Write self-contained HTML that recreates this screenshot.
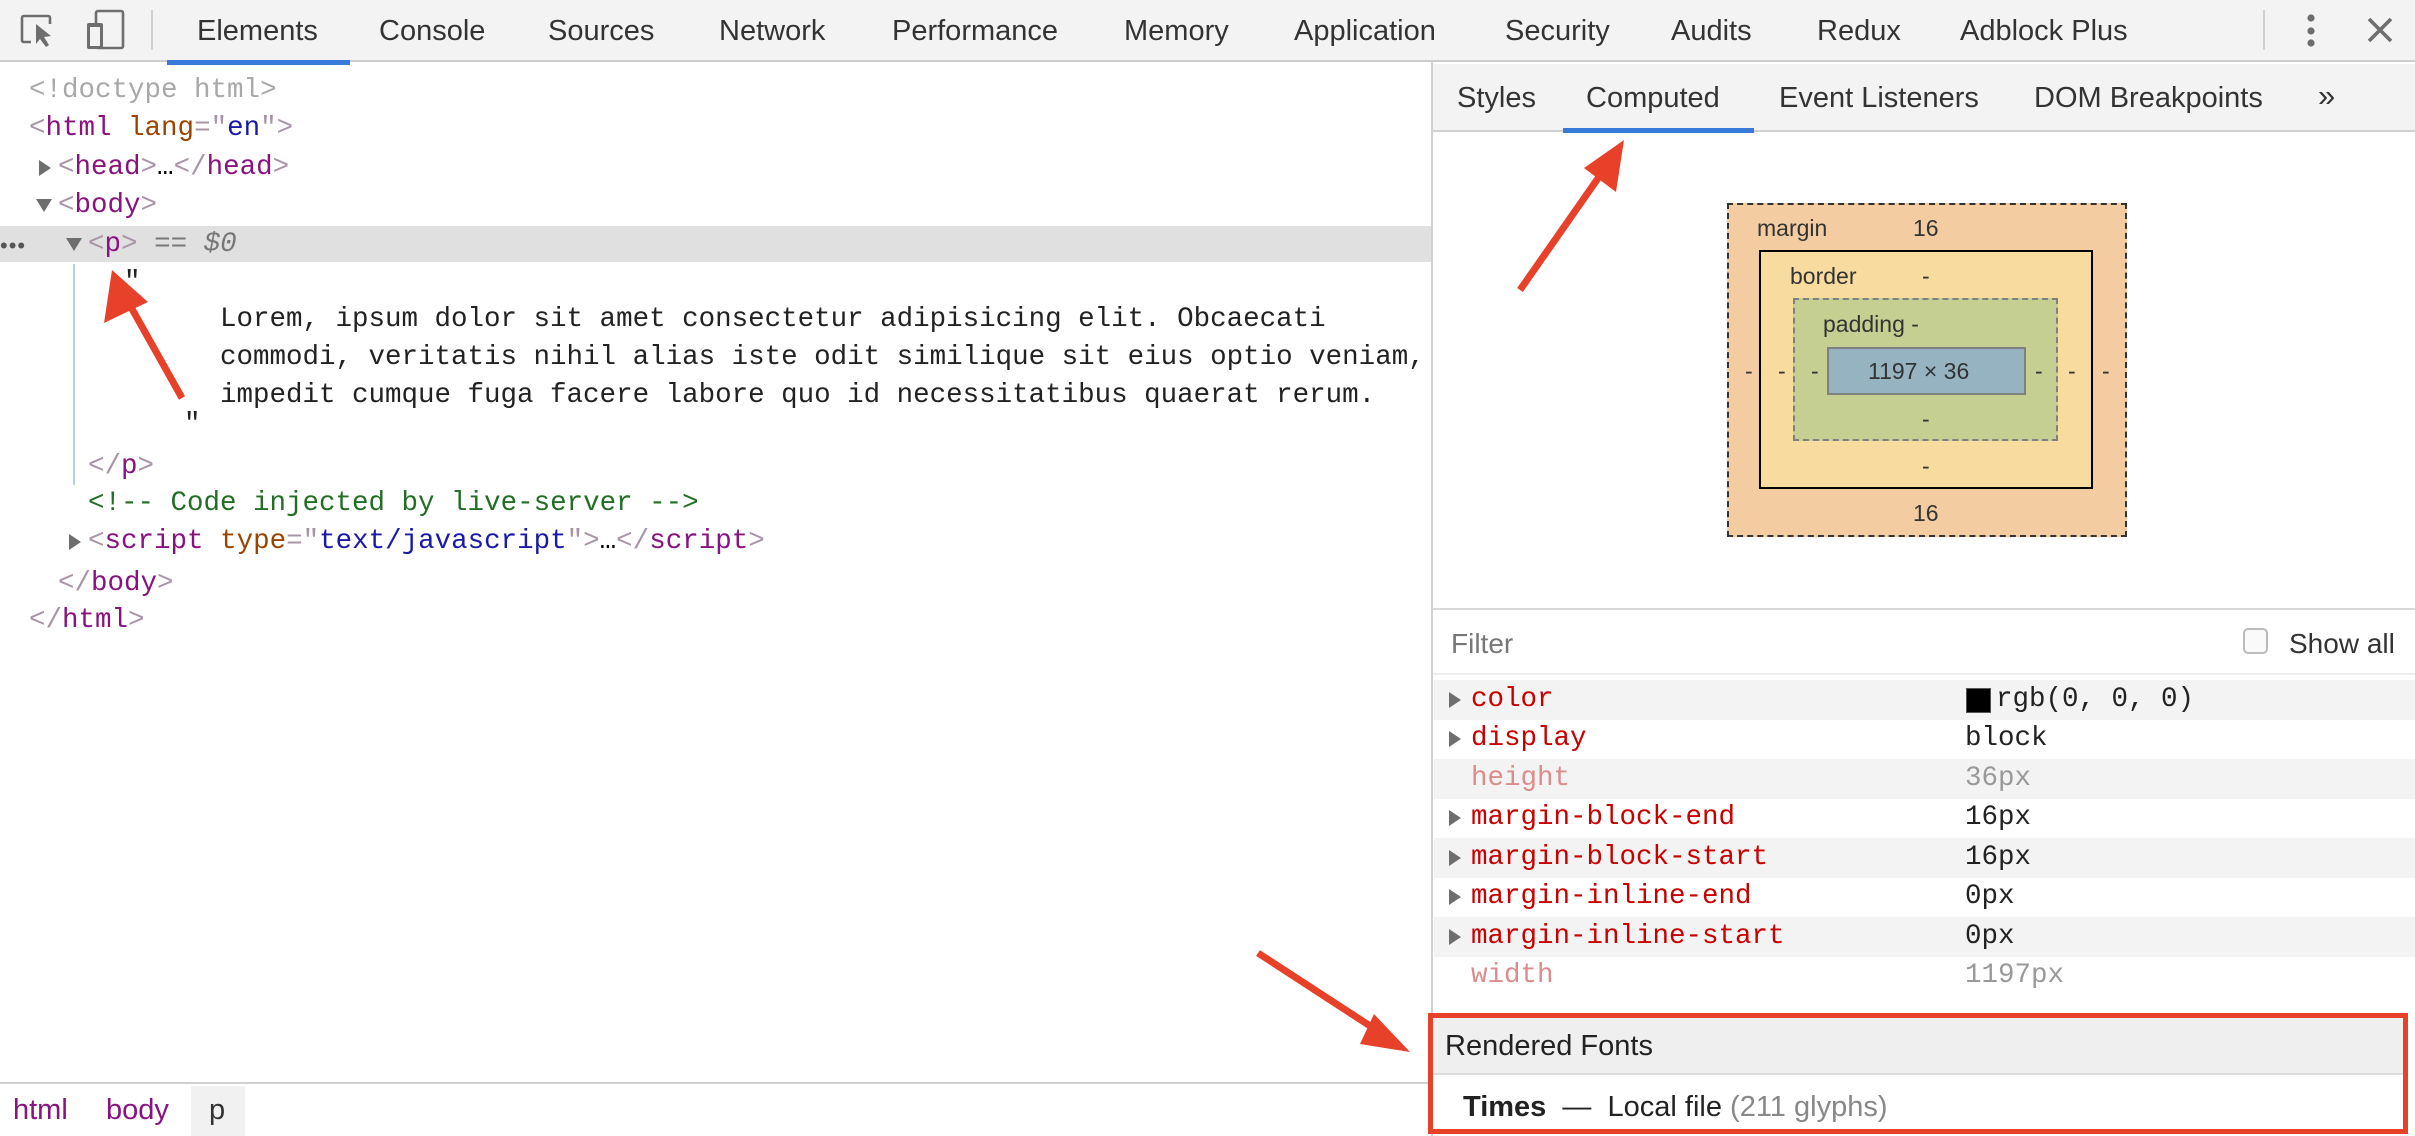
<!DOCTYPE html>
<html><head><meta charset="utf-8">
<style>
*{margin:0;padding:0;box-sizing:border-box}
body{width:2415px;height:1136px;overflow:hidden;background:#fff;font-family:"Liberation Sans",sans-serif;position:relative}
.a{position:absolute;white-space:pre}
.m{font-family:"Liberation Mono",monospace;font-size:27.5px;line-height:38px}
.tab{position:absolute;top:14px;font-size:29px;color:#333;line-height:34px}
.tg{color:#881280}.br{color:#a894a6}.at{color:#994500}.av{color:#1a1aa6}.cm{color:#236e25}.gr{color:#a8a8a8}
.tri{position:absolute;width:0;height:0}
.tr{border-top:8px solid transparent;border-bottom:8px solid transparent;border-left:12px solid #6e6e6e}
.td{border-left:8px solid transparent;border-right:8px solid transparent;border-top:13px solid #6e6e6e}
.row{position:absolute;left:1434px;width:981px;height:40px}
.pn{position:absolute;left:1471px;font-family:"Liberation Mono",monospace;font-size:27.5px;color:#c80000;line-height:40px}
.pv{position:absolute;left:1965px;font-family:"Liberation Mono",monospace;font-size:27.5px;color:#222;line-height:40px}
.bl{position:absolute;font-size:23px;color:#333;line-height:26px}
</style></head><body>
<div class="a" style="left:0;top:0;width:2415px;height:62px;background:#f3f3f3;border-bottom:2px solid #cdcdcd"></div>
<svg class="a" style="left:0;top:0" width="160" height="62">
<path d="M31 42 H24 Q22 42 22 40 V18 Q22 16 24 16 H48 Q50 16 50 18 V24" fill="none" stroke="#6e6e6e" stroke-width="2.6"/>
<path d="M36 24 L36 44 L40 39 L46 47 L49 45 L44 37 L51 36 Z" fill="#6e6e6e"/>
<rect x="96" y="11" width="27" height="37" rx="2" fill="none" stroke="#6e6e6e" stroke-width="2.6"/>
<rect x="87" y="23" width="16" height="26" rx="2" fill="#6e6e6e"/>
<rect x="90" y="27" width="10" height="19" fill="#f3f3f3"/>
<rect x="151" y="10" width="2" height="40" fill="#d0d0d0"/>
</svg>
<div class="a" style="left:167px;top:60px;width:183px;height:5px;background:#3879d9"></div>
<div class="tab" style="left:197px">Elements</div>
<div class="tab" style="left:379px">Console</div>
<div class="tab" style="left:548px">Sources</div>
<div class="tab" style="left:719px">Network</div>
<div class="tab" style="left:892px">Performance</div>
<div class="tab" style="left:1124px">Memory</div>
<div class="tab" style="left:1294px">Application</div>
<div class="tab" style="left:1505px">Security</div>
<div class="tab" style="left:1671px">Audits</div>
<div class="tab" style="left:1817px">Redux</div>
<div class="tab" style="left:1960px">Adblock Plus</div>
<svg class="a" style="left:2250px;top:0" width="165" height="62">
<rect x="13" y="10" width="2" height="40" fill="#d0d0d0"/>
<circle cx="61" cy="18" r="3.6" fill="#6e6e6e"/><circle cx="61" cy="31" r="3.6" fill="#6e6e6e"/><circle cx="61" cy="43" r="3.6" fill="#6e6e6e"/>
<path d="M119 19 L141 41 M141 19 L119 41" stroke="#6e6e6e" stroke-width="3.6"/>
</svg>

<div class="a" style="left:0;top:226px;width:1432px;height:36px;background:#e0e0e0"></div>
<div class="a m gr" style="left:29px;top:72px">&lt;!doctype html&gt;</div>
<div class="a m" style="left:29px;top:110px"><span class="br">&lt;</span><span class="tg">html</span> <span class="at">lang</span><span class="br">="</span><span class="av">en</span><span class="br">"&gt;</span></div>
<div class="tri tr" style="left:39px;top:160px"></div>
<div class="a m" style="left:58px;top:149px"><span class="br">&lt;</span><span class="tg">head</span><span class="br">&gt;</span>…<span class="br">&lt;/</span><span class="tg">head</span><span class="br">&gt;</span></div>
<div class="tri td" style="left:36px;top:199px"></div>
<div class="a m" style="left:58px;top:187px"><span class="br">&lt;</span><span class="tg">body</span><span class="br">&gt;</span></div>
<div class="a" style="left:0;top:233px;font-size:22px;color:#555;letter-spacing:1px">•••</div>
<div class="tri td" style="left:66px;top:238px"></div>
<div class="a m" style="left:88px;top:226px"><span class="br">&lt;</span><span class="tg">p</span><span class="br">&gt;</span> <span style="color:#777">==</span> <i style="color:#777">$0</i></div>
<div class="a" style="left:73px;top:264px;width:2px;height:221px;background:#b7cdeb"></div>
<div class="a m" style="left:124px;top:264px;color:#222">"</div>
<div class="a m" style="left:220px;top:301px;color:#222">Lorem, ipsum dolor sit amet consectetur adipisicing elit. Obcaecati
commodi, veritatis nihil alias iste odit similique sit eius optio veniam,
impedit cumque fuga facere labore quo id necessitatibus quaerat rerum.</div>
<div class="a m" style="left:184px;top:406px;color:#222">"</div>
<div class="a m" style="left:88px;top:448px"><span class="br">&lt;/</span><span class="tg">p</span><span class="br">&gt;</span></div>
<div class="a m cm" style="left:88px;top:485px">&lt;!-- Code injected by live-server --&gt;</div>
<div class="tri tr" style="left:69px;top:534px"></div>
<div class="a m" style="left:88px;top:523px"><span class="br">&lt;</span><span class="tg">script</span> <span class="at">type</span><span class="br">="</span><span class="av">text/javascript</span><span class="br">"&gt;</span>…<span class="br">&lt;/</span><span class="tg">script</span><span class="br">&gt;</span></div>
<div class="a m" style="left:58px;top:565px"><span class="br">&lt;/</span><span class="tg">body</span><span class="br">&gt;</span></div>
<div class="a m" style="left:29px;top:602px"><span class="br">&lt;/</span><span class="tg">html</span><span class="br">&gt;</span></div>

<div class="a" style="left:0;top:1082px;width:1432px;height:2px;background:#d0d0d0"></div>
<div class="a" style="left:191px;top:1086px;width:54px;height:50px;background:#f1f1f1"></div>
<div class="a" style="left:13px;top:1094px;font-size:29px;color:#881280">html</div>
<div class="a" style="left:106px;top:1094px;font-size:29px;color:#881280">body</div>
<div class="a" style="left:209px;top:1094px;font-size:29px;color:#333">p</div>

<div class="a" style="left:1431px;top:62px;width:2px;height:1074px;background:#d0d0d0"></div>
<div class="a" style="left:1433px;top:64px;width:982px;height:68px;background:#f3f3f3;border-bottom:2px solid #d0d0d0"></div>
<div class="a" style="left:1563px;top:128px;width:191px;height:5px;background:#3879d9"></div>
<div class="tab" style="left:1457px;top:81px">Styles</div>
<div class="tab" style="left:1586px;top:81px">Computed</div>
<div class="tab" style="left:1779px;top:81px">Event Listeners</div>
<div class="tab" style="left:2034px;top:81px">DOM Breakpoints</div>
<div class="tab" style="left:2318px;top:79px;font-size:31px">»</div>

<div class="a" style="left:1727px;top:203px;width:400px;height:334px;background:#f3cca1;border:2px dashed #333"></div>
<div class="a" style="left:1759px;top:250px;width:334px;height:239px;background:#f8dc9f;border:2px solid #000"></div>
<div class="a" style="left:1793px;top:298px;width:265px;height:143px;background:#c5cf91;border:2px dashed #808080"></div>
<div class="a" style="left:1827px;top:347px;width:199px;height:48px;background:#95b3c0;border:2px solid #808080"></div>
<div class="bl" style="left:1757px;top:215px">margin</div>
<div class="bl" style="left:1913px;top:215px">16</div>
<div class="bl" style="left:1790px;top:263px">border</div>
<div class="bl" style="left:1922px;top:263px">-</div>
<div class="bl" style="left:1823px;top:311px">padding -</div>
<div class="bl" style="left:1868px;top:358px">1197 × 36</div>
<div class="bl" style="left:1745px;top:358px">-</div>
<div class="bl" style="left:1778px;top:358px">-</div>
<div class="bl" style="left:1811px;top:358px">-</div>
<div class="bl" style="left:2035px;top:358px">-</div>
<div class="bl" style="left:2068px;top:358px">-</div>
<div class="bl" style="left:2102px;top:358px">-</div>
<div class="bl" style="left:1922px;top:406px">-</div>
<div class="bl" style="left:1922px;top:453px">-</div>
<div class="bl" style="left:1913px;top:500px">16</div>

<div class="a" style="left:1433px;top:608px;width:982px;height:2px;background:#d8d8d8"></div>
<div class="a" style="left:1451px;top:628px;font-size:28px;color:#777">Filter</div>
<div class="a" style="left:2243px;top:628px;width:25px;height:26px;border:2px solid #bbb;border-radius:5px;background:#fafafa"></div>
<div class="a" style="left:2289px;top:628px;font-size:28px;color:#333">Show all</div>
<div class="a" style="left:1433px;top:673px;width:982px;height:2px;background:#ececec"></div>

<div class="row" style="top:680px;background:#f3f3f3"></div>
<div class="row" style="top:759px;background:#f3f3f3"></div>
<div class="row" style="top:838px;background:#f3f3f3"></div>
<div class="row" style="top:917px;background:#f3f3f3"></div>
<div class="tri tr" style="left:1449px;top:692px"></div>
<div class="pn" style="top:680px">color</div>
<div class="a" style="left:1966px;top:688px;width:25px;height:25px;background:#000;border:1px solid #555"></div>
<div class="pv" style="top:680px;left:1996px">rgb(0, 0, 0)</div>
<div class="tri tr" style="left:1449px;top:731px"></div>
<div class="pn" style="top:719px">display</div><div class="pv" style="top:719px">block</div>
<div class="pn" style="top:759px;color:#dc8c8c">height</div><div class="pv" style="top:759px;color:#999">36px</div>
<div class="tri tr" style="left:1449px;top:810px"></div>
<div class="pn" style="top:798px">margin-block-end</div><div class="pv" style="top:798px">16px</div>
<div class="tri tr" style="left:1449px;top:850px"></div>
<div class="pn" style="top:838px">margin-block-start</div><div class="pv" style="top:838px">16px</div>
<div class="tri tr" style="left:1449px;top:889px"></div>
<div class="pn" style="top:877px">margin-inline-end</div><div class="pv" style="top:877px">0px</div>
<div class="tri tr" style="left:1449px;top:929px"></div>
<div class="pn" style="top:917px">margin-inline-start</div><div class="pv" style="top:917px">0px</div>
<div class="pn" style="top:956px;color:#dc8c8c">width</div><div class="pv" style="top:956px;color:#999">1197px</div>

<div class="a" style="left:1433px;top:1017px;width:972px;height:58px;background:#efefef;border-bottom:2px solid #ddd"></div>
<div class="a" style="left:1445px;top:1030px;font-size:29px;color:#222">Rendered Fonts</div>
<div class="a" style="left:1463px;top:1091px;font-size:29px;color:#222"><b>Times</b>  —  Local file <span style="color:#888">(211 glyphs)</span></div>
<div class="a" style="left:1428px;top:1013px;width:980px;height:121px;border:5px solid #e8412a"></div>

<svg class="a" style="left:0;top:0" width="2415" height="1136">
<g stroke="#e8412a" stroke-width="7" fill="#e8412a">
<line x1="182" y1="398" x2="127" y2="300"/>
<polygon points="112,270 104,323 148,302" stroke="none"/>
<line x1="1520" y1="290" x2="1608" y2="164"/>
<polygon points="1624,140 1584,168 1616,192" stroke="none"/>
<line x1="1258" y1="953" x2="1384" y2="1035"/>
<polygon points="1410,1052 1374,1014 1360,1044" stroke="none"/>
</g>
</svg>
</body></html>
